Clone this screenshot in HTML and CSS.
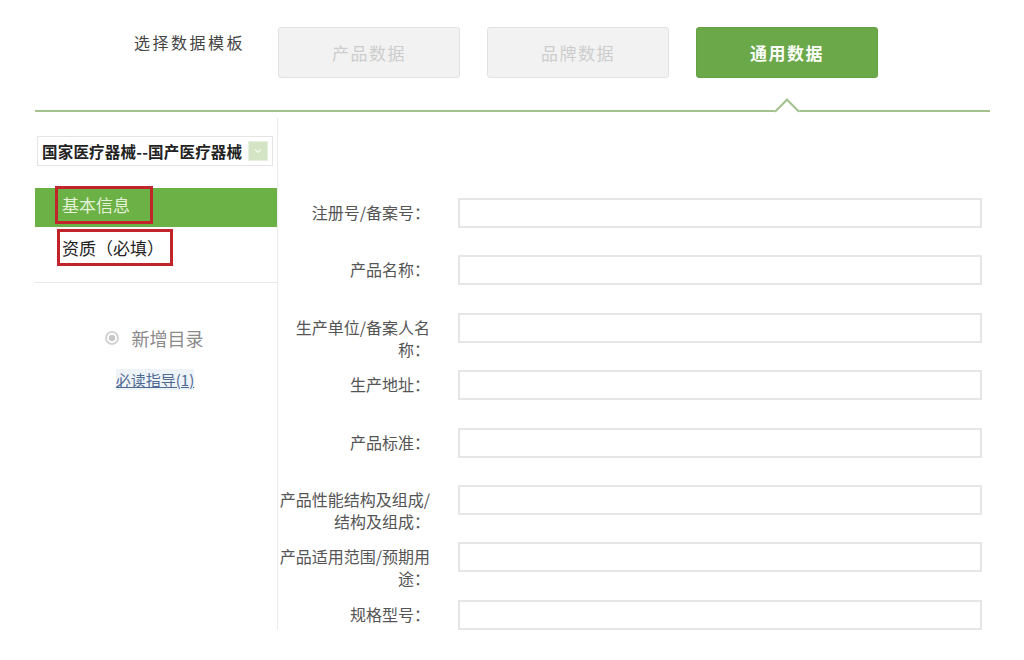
FILE: index.html
```html
<!DOCTYPE html>
<html lang="zh-CN">
<head>
<meta charset="utf-8">
<title>选择数据模板</title>
<link rel="stylesheet" href="styles.css">
</head>
<body>
<div class="page">
  <div class="top">
    <div class="top-label">选择数据模板</div>
    <div class="tabs">
      <div class="tab">产品数据</div>
      <div class="tab">品牌数据</div>
      <div class="tab tab-active">通用数据</div>
    </div>
  </div>
  <div class="divider"><span class="caret"></span></div>
  <div class="main">
    <aside class="sidebar">
      <div class="select">
        <span class="select-text">国家医疗器械--国产医疗器械</span>
        <span class="select-btn">
          <svg width="8" height="6" viewBox="0 0 8 6"><path d="M1 1.5 L4 4.5 L7 1.5" fill="none" stroke="#f4faef" stroke-width="1.2"/></svg>
        </span>
      </div>
      <div class="menu-item menu-active"><span class="mark mark-1">基本信息</span></div>
      <div class="menu-item"><span class="mark mark-2">资质（必填）</span></div>
      <div class="sep"></div>
      <div class="add-dir"><span class="add-icon"></span><span>新增目录</span></div>
      <div class="guide"><a href="#">必读指导(1)</a></div>
    </aside>
    <section class="form">
      <div class="row"><label class="lbl">注册号/备案号：</label><div class="inp"></div></div>
      <div class="row"><label class="lbl">产品名称：</label><div class="inp"></div></div>
      <div class="row"><label class="lbl">生产单位/备案人名<br>称：</label><div class="inp"></div></div>
      <div class="row"><label class="lbl">生产地址：</label><div class="inp"></div></div>
      <div class="row"><label class="lbl">产品标准：</label><div class="inp"></div></div>
      <div class="row"><label class="lbl">产品性能结构及组成/<br>结构及组成：</label><div class="inp"></div></div>
      <div class="row"><label class="lbl">产品适用范围/预期用<br>途：</label><div class="inp"></div></div>
      <div class="row"><label class="lbl">规格型号：</label><div class="inp"></div></div>
    </section>
  </div>
</div>
</body>
</html>
```
FILE: styles.css
```css
* { box-sizing: border-box; }
html, body { margin: 0; padding: 0; background: #fff; }
body {
  width: 1024px;
  height: 660px;
  overflow: hidden;
  font-family: "Noto Sans CJK SC", "Noto Sans", sans-serif;
  color: #333;
}
.page { padding-top: 27px; }

.top { display: flex; padding-left: 134px; }
.top-label {
  width: 144px;
  font-size: 16px;
  letter-spacing: 2.5px;
  line-height: 22px;
  margin-top: 4px;
  color: #444;
}
.tabs { display: flex; gap: 27px; }
.tab {
  width: 182px;
  height: 51px;
  border: 1px solid #e2e2e2;
  border-radius: 3px;
  background: #f2f2f2;
  color: #cdcdcd;
  font-size: 17px;
  letter-spacing: 1.5px;
  display: flex;
  align-items: center;
  justify-content: center;
}
.tab-active {
  background: #6aa84a;
  border-color: #64a044;
  color: #fbfdf8;
  font-weight: bold;
}

.divider {
  position: relative;
  margin: 32px 34px 0 35px;
  height: 2px;
  background: #a3c28e;
}
.caret {
  position: absolute;
  left: 743px;
  top: -8px;
  width: 18px;
  height: 18px;
  background: #fff;
  border-top: 2px solid #a3c28e;
  border-left: 2px solid #a3c28e;
  transform: rotate(45deg);
}

.main { display: flex; margin-left: 35px; margin-top: 6px; }
.sidebar {
  width: 243px;
  height: 512px;
  border-right: 1px solid #ececec;
  padding-top: 18px;
}
.select {
  margin-left: 2px;
  width: 236px;
  height: 30px;
  border: 1px solid #e4e4e4;
  display: flex;
  align-items: center;
  justify-content: space-between;
  padding: 0 4px 0 4px;
}
.select-text {
  font-size: 15.5px;
  font-weight: bold;
  color: #222;
  letter-spacing: 0.2px;
  white-space: nowrap;
}
.select-btn {
  width: 20px;
  height: 20px;
  background: #d3e5c5;
  border: 1px solid #e6efe0;
  display: flex;
  align-items: center;
  justify-content: center;
}
.menu-item {
  height: 39px;
  display: flex;
  align-items: flex-start;
  padding-left: 20px;
}
.menu-active {
  margin-top: 22px;
  background: #6cb145;
}
.mark {
  display: inline-block;
  border: 3px solid #c1252b;
  font-size: 17px;
  line-height: 32px;
  padding-left: 4px;
  white-space: nowrap;
}
.mark-1 {
  width: 98px;
  height: 38px;
  margin-top: -2px;
  color: #e4f2d7;
}
.mark-2 {
  width: 116px;
  height: 37px;
  margin-top: 2px;
  margin-left: 2px;
  padding-left: 2px;
  color: #222;
}
.sep {
  margin-top: 16px;
  height: 1px;
  background: #e8e8e8;
}
.add-dir {
  margin-top: 43px;
  display: flex;
  align-items: center;
  justify-content: center;
  gap: 13px;
  font-size: 18px;
  line-height: 24px;
  color: #8a8a8a;
  padding-right: 4px;
}
.add-icon {
  width: 14px;
  height: 14px;
  border-radius: 50%;
  border: 2px solid #d4d4d4;
  background: radial-gradient(circle, #c8c8c8 0 3px, #fff 3.5px);
}
.guide {
  margin-top: 20px;
  text-align: center;
  font-size: 15px;
  line-height: 20px;
  padding-right: 2px;
}
.guide a {
  color: #4e6a91;
  text-decoration: underline;
  background: #eef3f8;
}

.form {
  flex: 1;
  padding-top: 80px;
}
.row {
  display: flex;
  align-items: flex-start;
  height: 57.4px;
}
.lbl {
  width: 152px;
  text-align: right;
  font-size: 16px;
  line-height: 22px;
  padding-top: 3px;
  color: #555;
}
.inp {
  margin-left: 28px;
  width: 524px;
  height: 30px;
  border: 2px solid #e6e6e6;
  background: #fff;
}
```
